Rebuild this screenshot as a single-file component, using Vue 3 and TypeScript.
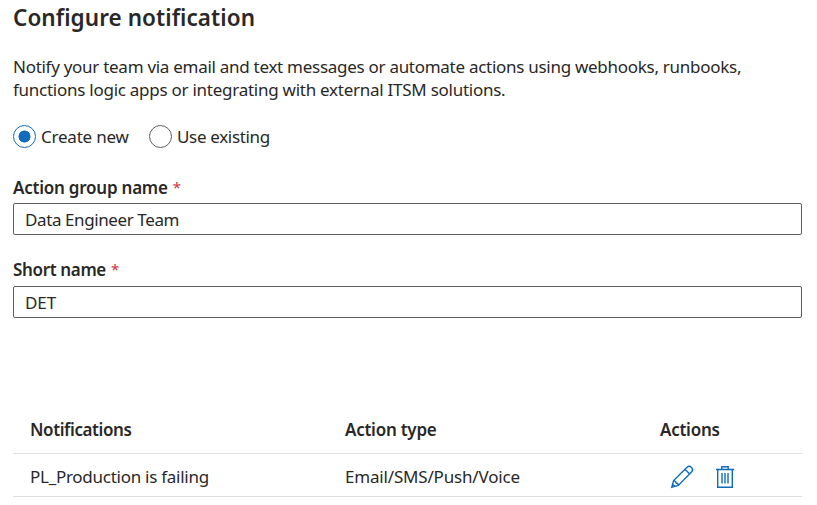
<script setup lang="ts">
import { ref } from 'vue'

interface NotificationRow {
  name: string
  type: string
}

const mode = ref<'new' | 'existing'>('new')
const groupName = ref('Data Engineer Team')
const shortName = ref('DET')
const rows: NotificationRow[] = [
  { name: 'PL_Production is failing', type: 'Email/SMS/Push/Voice' },
]
</script>

<template>
  <main class="panel">
    <h1 class="title">Configure notification</h1>
    <p class="intro">
      Notify your team via email and text messages or automate actions using webhooks, runbooks,<br />
      <span class="intro-end">functions logic apps or integrating with external ITSM solutions.</span>
    </p>

    <div class="choices">
      <label class="choice choice-new">
        <input v-model="mode" class="radio" type="radio" name="mode" value="new" />
        <span>Create new</span>
      </label>
      <label class="choice choice-existing">
        <input v-model="mode" class="radio" type="radio" name="mode" value="existing" />
        <span>Use existing</span>
      </label>
    </div>

    <div class="field">
      <label class="label label-group" for="group"><span>Action group name</span><span class="star">*</span></label>
      <input id="group" v-model="groupName" class="box" type="text" />
    </div>
    <div class="field">
      <label class="label label-short" for="short"><span>Short name</span><span class="star">*</span></label>
      <input id="short" v-model="shortName" class="box box-short" type="text" />
    </div>

    <section class="table">
      <div class="row head">
        <span>Notifications</span>
        <span class="h-type">Action type</span>
        <span class="h-type">Actions</span>
      </div>
      <div v-for="row in rows" :key="row.name" class="row body">
        <span class="c-name">{{ row.name }}</span>
        <span class="c-type">{{ row.type }}</span>
        <span class="icons">
          <svg class="icon" width="24" height="24" viewBox="0 0 24 24">
            <path d="M1.8 22.3 3.6 15.6 16.8 2.4a3.3 3.3 0 0 1 4.7 4.7L8.3 20.4z M3.6 15.6Q5.6 15.6 6 18Q8.4 18.4 8.3 20.4 M15 4.2 19.7 8.9 M2.6 19.2 4.9 21.4" />
          </svg>
          <svg class="icon" width="20" height="24" viewBox="0 0 20 24">
            <path d="M1 4.5H19 M6.8 4.2V1.7H13.2V4.2 M2.7 4.5V22.3H17.3V4.5 M7 8V18.5 M10 8V18.5 M13 8V18.5" />
          </svg>
        </span>
      </div>
    </section>
  </main>
</template>

<style>
body {
  background: #fff;
}
</style>

<style scoped>
.panel {
  box-sizing: border-box;
  width: 817px;
  height: 505px;
  padding: 3px 15px 0 13px;
  overflow: hidden;
  font-family: 'Segoe UI', 'Noto Sans', 'Open Sans', sans-serif;
  font-size: 17px;
  line-height: 23px;
  letter-spacing: -0.4px;
  color: #292827;
  white-space: nowrap;
}
.title {
  margin: 0;
  font-size: 22.5px;
  line-height: 30px;
  font-weight: 600;
  letter-spacing: 0.06px;
}
.intro {
  margin: 22px 0 0;
  letter-spacing: -0.28px;
}
.intro-end {
  letter-spacing: -0.26px;
}
.choices {
  display: flex;
  gap: 20px;
  height: 23px;
  margin-top: 24px;
}
.choice {
  display: flex;
  align-items: center;
  gap: 5px;
}
.choice-new {
  width: 116px;
  letter-spacing: -0.22px;
}
.choice-existing {
  letter-spacing: -0.33px;
}
.radio {
  appearance: none;
  box-sizing: border-box;
  width: 23px;
  height: 23px;
  margin: 0;
  border: 1px solid #605e5c;
  border-radius: 50%;
  background: #fff;
}
.radio:checked {
  border-color: #0f6cbd;
  background: radial-gradient(circle, #0f6cbd 5.7px, #fff 6.3px);
}
.field {
  height: 83px;
}
.choices + .field {
  margin-top: 28px;
  height: 82px;
}
.label {
  display: flex;
  gap: 5px;
  height: 27px;
  font-weight: 600;
}
.label-group {
  letter-spacing: -0.23px;
}
.label-short {
  height: 28px;
  letter-spacing: -0.35px;
}
.star {
  color: #d13438;
  font-size: 15px;
  font-weight: 400;
}
.box {
  display: block;
  box-sizing: border-box;
  width: 789px;
  height: 32px;
  padding: 0 11px;
  border: 1px solid #605e5c;
  border-radius: 2px;
  outline: none;
  font: inherit;
  letter-spacing: inherit;
  color: inherit;
}
.box-short {
  letter-spacing: -0.1px;
}
.table {
  margin-top: 65px;
}
.row {
  display: grid;
  grid-template-columns: 315px 315px 1fr;
  align-items: center;
  box-sizing: border-box;
  padding-left: 17px;
  border-bottom: 1px solid #e1dfdd;
}
.head {
  height: 48px;
  font-weight: 600;
}
.h-type {
  letter-spacing: -0.25px;
}
.body {
  height: 43px;
  padding-top: 2px;
}
.c-name {
  letter-spacing: -0.27px;
}
.c-type {
  letter-spacing: -0.18px;
}
.icons {
  display: flex;
  align-items: center;
  gap: 21px;
  padding: 2px 0 0 10px;
}
.icon {
  fill: none;
  stroke: #0f6cbd;
  stroke-width: 1.4;
}
</style>
